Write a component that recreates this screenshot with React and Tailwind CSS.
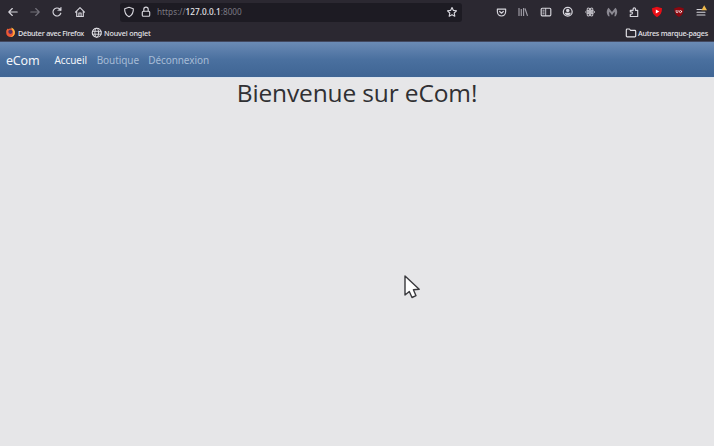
import React from "react";

function Icon({ children, className = "", size = 12 }) {
  return (
    <svg
      width={size}
      height={size}
      viewBox="0 0 12 12"
      fill="none"
      stroke="currentColor"
      strokeWidth="1.15"
      strokeLinecap="round"
      strokeLinejoin="round"
      className={"block shrink-0 " + className}
    >
      {children}
    </svg>
  );
}

function Slot({ children }) {
  return <div className="flex w-[22.2px] shrink-0 items-center justify-center">{children}</div>;
}

function Toolbar() {
  return (
    <div className="flex h-6 items-center pl-[2px] pr-[2px] text-[#d6d5dc]">
      <div className="flex w-[117.5px] shrink-0">
        <Slot>
          <Icon><path d="M10.2 6H1.8M5.3 2.5 1.8 6l3.5 3.5" /></Icon>
        </Slot>
        <Slot>
          <Icon className="text-[#74727b]"><path d="M1.8 6h8.4M6.7 2.5 10.2 6 6.7 9.5" /></Icon>
        </Slot>
        <Slot>
          <Icon>
            <path d="M9.8 7.2A4 4 0 1 1 8.9 3.2L9.6 4" />
            <path d="M10.2 1.4v3.2H7z" fill="currentColor" strokeWidth="0.5" />
          </Icon>
        </Slot>
        <Slot>
          <Icon>
            <path d="M1.5 6.1 6 1.7l4.5 4.4M2.7 5.3v5.2h6.6V5.3" />
            <path d="M4.9 10.3V7h2.2v3.3" />
          </Icon>
        </Slot>
      </div>
      <div className="flex h-[19px] w-[342.5px] shrink-0 items-center rounded-[3px] bg-[#1d1b23] pl-[3.5px] pr-[4px]">
        <Icon>
          <path d="M6 1.300 10.300 2.700C10.600 6.400 9.200 9 6 10.800 2.800 9 1.400 6.400 1.700 2.700z" />
        </Icon>
        <Icon className="ml-[5px]">
          <path d="M3.800 5V3.300a2.200 2.200 0 0 1 4.400 0V5" />
          <rect x="2.300" y="5.200" width="7.400" height="5" rx="1" />
        </Icon>
        <span className="ml-[5px] whitespace-nowrap pt-px text-[8.2px] leading-none tracking-[0.04px] text-[#7b7982]">
          https://<span className="font-medium text-[#e6e5ea]">127.0.0.1</span>:8000
        </span>
        <Icon className="ml-auto" size={12}>
          <path d="m6 1.500 1.400 2.900 3.100.4-2.300 2.200.6 3.200L6 8.700l-2.800 1.500.6-3.200-2.300-2.200 3.100-.4z" />
        </Icon>
      </div>
      <div className="ml-auto flex">
        <Slot>
          <Icon size={11}>
            <path d="M1.500 2.300h9v3a4.500 4.500 0 0 1-9 0z" strokeWidth="1.300" />
            <path d="M4 4.900 6 6.800l2-1.900" strokeWidth="1.300" />
          </Icon>
        </Slot>
        <Slot>
          <Icon className="text-[#a09ea7]"><path d="M2 2v8M4.300 3v7M6.600 2v8M8 2.500l2.500 7.400" strokeLinecap="butt" /></Icon>
        </Slot>
        <Slot>
          <Icon>
            <rect x="1.200" y="2.200" width="9.600" height="7.600" rx="1" />
            <path d="M5.700 2.400v7.200M2.900 4.200h1.200M2.900 6h1.200M2.900 7.800h1.200" strokeWidth="0.9" />
          </Icon>
        </Slot>
        <Slot>
          <Icon size={11.5}>
            <circle cx="6" cy="6" r="4.600" strokeWidth="1.300" />
            <circle cx="6" cy="4.600" r="1.800" fill="currentColor" stroke="none" />
            <path d="M2.900 7h6.200C8.800 9 7.600 9.600 6 9.600S3.200 9 2.900 7z" fill="currentColor" stroke="none" />
          </Icon>
        </Slot>
        <Slot>
          <Icon size={12} className="text-[#c3c1c8]">
            <g strokeWidth="1">
              <ellipse cx="6" cy="6" rx="4.400" ry="1.800" />
              <ellipse cx="6" cy="6" rx="4.400" ry="1.800" transform="rotate(60 6 6)" />
              <ellipse cx="6" cy="6" rx="4.400" ry="1.800" transform="rotate(120 6 6)" />
            </g>
            <circle cx="6" cy="6" r="1" fill="currentColor" />
          </Icon>
        </Slot>
        <Slot>
          <Icon className="text-[#8b8992]">
            <path d="M2.300 10.200C0 7.200.5 3.600 2.600 1.800L6 6l3.400-4.200c2.100 1.800 2.600 5.400.3 8.400H8.200c.7-1.500.8-3 .3-4.500L6 9.200 3.500 5.700c-.5 1.500-.4 3 .3 4.500z" fill="currentColor" stroke="none" />
          </Icon>
        </Slot>
        <Slot>
          <Icon>
            <path d="M2.300 10.500h7.400V4.300H7.500V3a1.200 1.200 0 0 0-2.400 0v1.300H2.300v1.600h1a1.150 1.150 0 0 1 0 2.300h-1z" />
          </Icon>
        </Slot>
        <Slot>
          <Icon>
            <path d="M6 .8 11 2.200C11 6.600 9.500 9.200 6 11.200 2.500 9.200 1 6.600 1 2.200z" fill="#e80e16" stroke="none" />
            <path d="m4.800 3.500 3.500 2-3.500 2z" fill="#fff" stroke="none" />
          </Icon>
        </Slot>
        <Slot>
          <Icon>
            <path d="M6 1 10.700 2.200C10.700 6.600 9.500 9.200 6 11 2.500 9.200 1.300 6.600 1.300 2.200z" fill="#8b0810" stroke="none" />
            <path d="M3.200 4.500v1.300q0 .9.900.9t.9-.9V4.500" stroke="#fff" strokeWidth="0.800" />
            <circle cx="7.500" cy="5.600" r="1.100" stroke="#fff" strokeWidth="0.800" />
          </Icon>
        </Slot>
        <Slot>
          <Icon className="overflow-visible">
            <path d="M2 3.400h4.500M2 6.200h8M2 9h8" strokeWidth="1.050" />
            <path d="M9.200-.8 12 4.200H6.400z" fill="#f0ba4b" stroke="none" />
          </Icon>
        </Slot>
      </div>
    </div>
  );
}

function Bookmarks() {
  return (
    <div className="flex h-[17px] items-center pl-[5px] pr-[6px] text-[7.2px] font-medium leading-none text-[#e6e5ea]">
      <Icon size={11}>
        <circle cx="6" cy="6.300" r="4.700" fill="#ed5635" stroke="none" />
        <path d="M1.400 5.400C1.200 3.700 2 2.300 3.100 1.500l.7 1.700z" fill="#f06a38" stroke="none" />
        <path d="M7 .6c2.700 1.200 4.200 3.300 3.700 6.300-.4 2.400-2.300 4-4.700 4 2.800-1.500 3.800-4 2.700-6.300C8.100 3.500 6.900 2.500 7 .6z" fill="#ffb23c" stroke="none" />
        <circle cx="5.900" cy="5.300" r="2.300" fill="#55305f" stroke="none" />
      </Icon>
      <span className="ml-[2px] w-[67px] whitespace-nowrap pt-[2px] tracking-[-0.25px]">Débuter avec Firefox</span>
      <Icon size={11.5} className="ml-[6px]">
        <circle cx="6" cy="6" r="4.700" />
        <ellipse cx="6" cy="6" rx="2" ry="4.700" strokeWidth="0.900" />
        <path d="M1.500 4.500h9M1.500 7.500h9" strokeWidth="0.900" />
      </Icon>
      <span className="ml-[1.500px] whitespace-nowrap pt-[2px] tracking-[-0.14px]">Nouvel onglet</span>
      <Icon size={12} className="ml-auto">
        <path d="M1.300 9V2.900q0-.9.900-.9h2.200l1.200 1.400h4.200q.9 0 .9.900V9q0 .9-.9.900H2.200q-.9 0-.9-.9z" />
      </Icon>
      <span className="ml-[1px] whitespace-nowrap pt-[2px] tracking-[-0.22px]">Autres marque-pages</span>
    </div>
  );
}

export default function App() {
  return (
    <div className="relative flex h-[446px] w-[714px] flex-col overflow-hidden bg-[#e6e6e8] font-['Noto_Sans',sans-serif]">
      <header className="h-[42px] shrink-0 border-b border-[#434960] bg-[#2b2831]">
        <Toolbar />
        <Bookmarks />
      </header>
      <nav className="flex h-[35px] shrink-0 items-center bg-linear-to-b from-[#6b8bb5] via-[#4a709f] via-50% to-[#3f6594] pl-[6px] text-[10px] leading-none tracking-[-0.08px] text-[#a7bcd6]">
        <a className="w-[48.500px] pt-[3px] text-[12.5px] tracking-[-0.2px] text-[#f2f5fa]">eCom</a>
        <a className="w-[42.200px] text-[#f2f5fa]">Accueil</a>
        <a className="w-[51.500px]">Boutique</a>
        <a>Déconnexion</a>
      </nav>
      <main className="flex justify-center border-t border-[#dce4ee]">
        <h1 className="whitespace-nowrap font-['Open_Sans',sans-serif] text-[24.5px] leading-[30px] tracking-[-0.14px] text-[#303033]">Bienvenue sur eCom!</h1>
      </main>
      <svg className="absolute left-[403px] top-[274px]" width="20" height="27" viewBox="0 0 20 27">
        <path d="M2 2v19l4.300-3.500 2.700 6 4-1.800-2.600-5.900 5.800-.6z" fill="#fff" stroke="#39393d" strokeWidth="1.400" strokeLinejoin="round" />
      </svg>
    </div>
  );
}
